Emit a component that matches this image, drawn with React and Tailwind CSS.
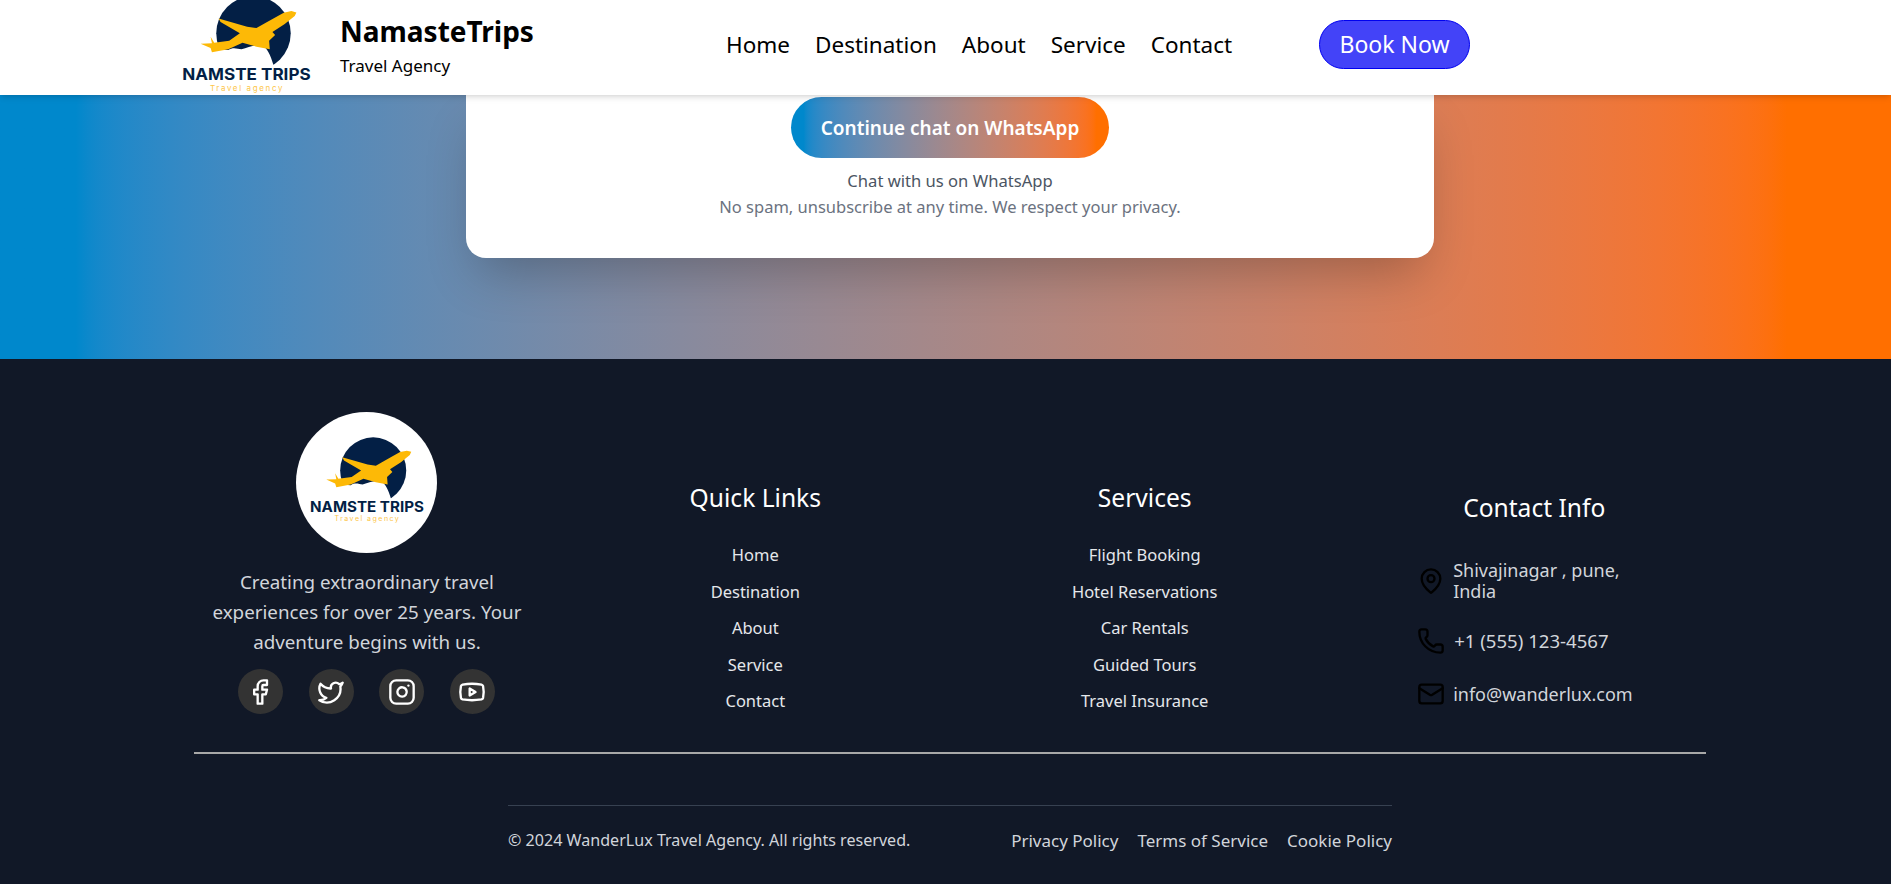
import { Facebook, Twitter, Instagram, Youtube, MapPin, Phone, Mail } from "lucide-react";

const navLinks = ["Home", "Destination", "About", "Service", "Contact"];
const quickLinks = ["Home", "Destination", "About", "Service", "Contact"];
const services = ["Flight Booking", "Hotel Reservations", "Car Rentals", "Guided Tours", "Travel Insurance"];
const socials = [Facebook, Twitter, Instagram, Youtube];

function Logo({ viewBox, className }) {
  return (
    <svg viewBox={viewBox} className={className}>
      <circle cx="281" cy="100" r="112" fill="#031f45" />
      <path
        d="M150 215 L150 146 L205 150 C220 140 232 146 245 148 C265 142 290 132 305 136 C322 142 332 165 342 198 L350 215 Z"
        fill="#fff"
      />
      <path
        d="M410 37 L395 33 L372 38 L318 68 L290 84 L262 80 L176 55 L182 66 L240 100 L208 122 L163 128 L152 110 L156 130 L122 131 L152 144 L156 157 L205 148 L248 128 L290 140 L330 148 L328 122 L346 105 L338 96 L375 72 L405 48 Z"
        fill="#fdb906"
      />
      <text x="260" y="240" textAnchor="middle" fill="#031f45" fontFamily="Inter, sans-serif" fontWeight="700" fontSize="49" textLength="386" lengthAdjust="spacingAndGlyphs">
        NAMSTE TRIPS
      </text>
      <text x="259" y="273" textAnchor="middle" fill="#fdc64a" fontFamily="Inter, sans-serif" fontSize="24" textLength="218" lengthAdjust="spacing">
        Travel agency
      </text>
    </svg>
  );
}

function LinkColumn({ title, links }) {
  return (
    <div className="flex flex-col items-center pt-[122px]">
      <h3 className="text-[24.6px] leading-[34px] text-white">{title}</h3>
      <ul className="mt-[27px] flex flex-col items-center gap-[11px]">
        {links.map((l) => (
          <li key={l} className="text-[16.5px] leading-[25.5px] text-[#e5e7eb]">
            {l}
          </li>
        ))}
      </ul>
    </div>
  );
}

export default function App() {
  return (
    <div className="min-h-screen bg-[#111827] font-['Noto_Sans',sans-serif]">
      <header className="relative z-10 flex h-[95px] items-start bg-white pl-[180px] shadow-md">
        <Logo viewBox="60 0 400 285" className="h-[95px] w-[133px] shrink-0" />
        <div className="ml-[27px] w-[386px] shrink-0 pt-[13px]">
          <h1 className="text-[28px] font-bold leading-[36px] text-black">NamasteTrips</h1>
          <p className="mt-[5px] text-[17px] leading-[24px] text-black">Travel Agency</p>
        </div>
        <nav className="mt-[29px] flex w-[593px] shrink-0 items-center gap-[25px]">
          {navLinks.map((l) => (
            <a key={l} className="text-[22.5px] leading-[32px] text-black">
              {l}
            </a>
          ))}
        </nav>
        <button className="mt-[20px] h-[49px] w-[151px] rounded-full border border-[#0000f0] bg-[#4343f8] text-[23px] text-white">
          Book Now
        </button>
      </header>

      <section className="h-[264px] bg-gradient-to-r from-[#0088cc] from-[4%] to-[#ff6f00] to-[94.5%]">
        <div className="ml-[466px] flex h-[163px] w-[968px] flex-col items-center rounded-b-[20px] bg-white pt-[2px] shadow-2xl">
          <button className="h-[61px] w-[318px] rounded-full bg-gradient-to-r from-[#0088cc] from-[4%] to-[#ff6f00] to-[96%] pt-[1px] text-[19px] font-semibold text-white">
            Continue chat on WhatsApp
          </button>
          <p className="mt-[10px] text-[16.6px] leading-[26px] text-[#4b5563]">Chat with us on WhatsApp</p>
          <p className="text-[16.5px] leading-[26px] text-[#6b7280]">No spam, unsubscribe at any time. We respect your privacy.</p>
        </div>
      </section>

      <footer className="h-[525px] pl-[194px]">
        <div className="grid w-[1512px] grid-cols-4 gap-x-[45.5px] pb-[38px]">
          <div className="flex flex-col items-center pl-[2px] pt-[53px]">
            <div className="flex h-[141px] w-[141px] items-center justify-center rounded-full bg-white">
              <Logo viewBox="60 -20 400 305" className="mb-[6px] h-[90px] w-[118px]" />
            </div>
            <p className="mt-[14px] w-[320px] text-center text-[18.8px] leading-[30px] text-[#d1d5db]">
              Creating extraordinary travel experiences for over 25 years. Your adventure begins with us.
            </p>
            <div className="mt-[12px] flex gap-[25.7px] pr-[1px]">
              {socials.map((Icon, i) => (
                <a key={i} className="flex h-[45px] w-[45px] items-center justify-center rounded-full bg-[#333333] text-white">
                  <Icon size={28} />
                </a>
              ))}
            </div>
          </div>

          <LinkColumn title="Quick Links" links={quickLinks} />
          <LinkColumn title="Services" links={services} />

          <div className="flex flex-col pl-[55px] pt-[132px]">
            <h3 className="ml-[46px] text-[24.6px] leading-[34px] text-white">Contact Info</h3>
            <ul className="mt-[35px] flex flex-col gap-[25px] text-[18px] text-[#d1d5db]">
              <li className="flex items-center gap-2">
                <MapPin size={28} className="shrink-0 text-black" />
                <span className="w-[180px] leading-[21px]">Shivajinagar , pune, India</span>
              </li>
              <li className="flex items-center gap-2">
                <Phone size={28} className="shrink-0 text-black" />
                <span className="ml-[1px] text-[18.6px]">+1 (555) 123-4567</span>
              </li>
              <li className="flex items-center gap-2">
                <Mail size={28} className="shrink-0 text-black" />
                <span>info@wanderlux.com</span>
              </li>
            </ul>
          </div>
        </div>

        <div className="h-[2px] w-[1512px] bg-[#a8a8a8]" />

        <div className="ml-[314px] mt-[51px] w-[884px] border-t border-[#374151] pt-[20px]">
          <div className="flex items-center justify-between">
            <p className="text-[16.1px] leading-[24px] text-[#d1d5db]">© 2024 WanderLux Travel Agency. All rights reserved.</p>
            <div className="flex gap-[19px] pt-[3px] text-[17px] leading-[24px] text-[#d1d5db]">
              <a>Privacy Policy</a>
              <a>Terms of Service</a>
              <a>Cookie Policy</a>
            </div>
          </div>
        </div>
      </footer>
    </div>
  );
}
